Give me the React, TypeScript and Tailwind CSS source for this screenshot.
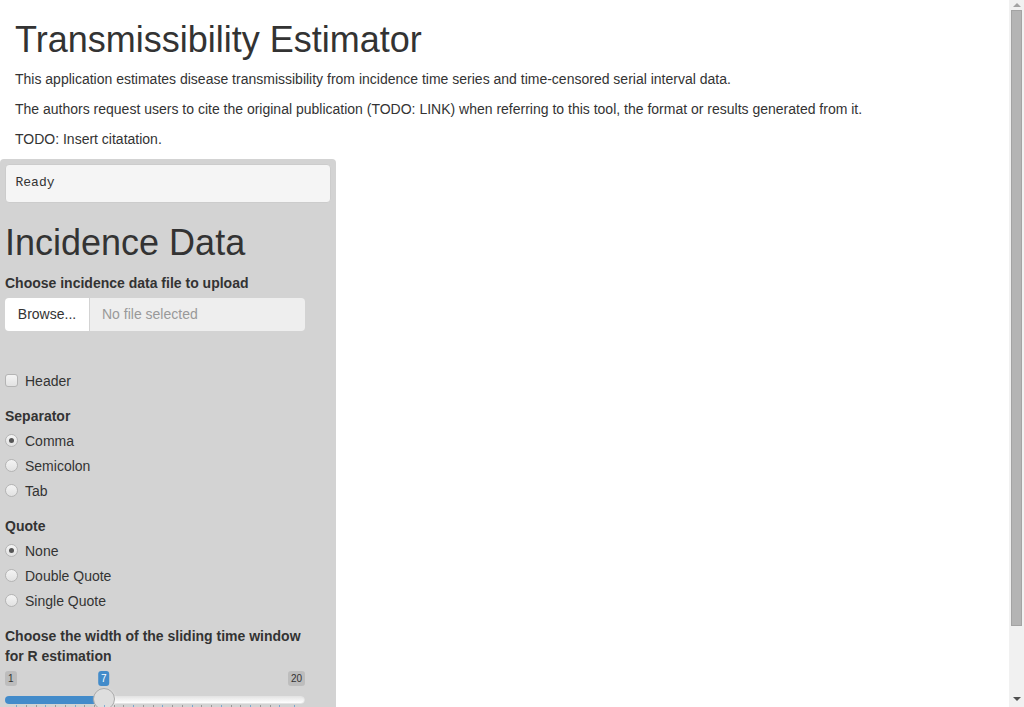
import React from "react"

const sans = "font-['Liberation_Sans','Helvetica_Neue',Arial,sans-serif]"

function Radio({ label, checked }: { label: string; checked?: boolean }) {
  return (
    <label className="flex items-center h-5 mb-[5px]">
      <span className="w-[13px] h-[13px] rounded-full border border-[#b4b4b4] bg-gradient-to-b from-[#f4f4f4] to-[#e2e2e2] flex items-center justify-center shrink-0">
        {checked && <span className="w-[5px] h-[5px] rounded-full bg-[#555]" />}
      </span>
      <span className="ml-[7px] text-sm text-[#333]">{label}</span>
    </label>
  )
}

function Slider() {
  const min = 1
  const max = 20
  const value = 7
  const pct = (value - min) / (max - min)
  const center = 11 + pct * 278
  const big: number[] = []
  const small: number[] = []
  for (let v = 1; v <= 19; v += 2) {
    const x = 11 + ((v - min) / (max - min)) * 278
    big.push(x)
    const step = (2 / 19) * 278
    if (v < 19) {
      small.push(x + step / 3, x + (2 * step) / 3)
    }
  }
  big.push(289)
  return (
    <div className="relative w-[300px] h-[64px]">
      <span className="absolute left-0 top-0 px-[3px] py-px text-[10px] leading-[13px] rounded-[3px] bg-black/10 text-[#333]">1</span>
      <span className="absolute right-0 top-0 px-[3px] py-px text-[10px] leading-[13px] rounded-[3px] bg-black/10 text-[#333]">20</span>
      <span
        className="absolute top-0 px-[3px] py-px text-[10px] leading-[13px] rounded-[3px] bg-[#428bca] text-white -translate-x-1/2"
        style={{ left: center }}
      >
        {value}
      </span>
      <div className="absolute left-0 right-0 top-[25px] h-2 rounded-full border border-[#e4e4e4] bg-gradient-to-b from-[#e6e6e6] to-white" />
      <div className="absolute left-0 top-[25px] h-2 rounded-l-full bg-[#428bca]" style={{ width: center }} />
      <div
        className="absolute top-[17px] w-[22px] h-[22px] rounded-full border border-[#aaa] bg-[#dedede] shadow-[1px_1px_3px_rgba(255,255,255,0.3)]"
        style={{ left: center - 11 }}
      />
      {big.map((x, i) => (
        <span key={"b" + i} className="absolute top-[34px] w-px h-2 bg-[#428bca]/60" style={{ left: x }} />
      ))}
      {small.map((x, i) => (
        <span key={"s" + i} className="absolute top-[34px] w-px h-1 bg-[#999]" style={{ left: x }} />
      ))}
    </div>
  )
}

function Scrollbar() {
  return (
    <div className="w-[15px] h-full bg-[#f1f1f1] flex flex-col items-center shrink-0">
      <div className="h-[10px] flex items-center justify-center">
        <span className="w-0 h-0 border-l-[4px] border-r-[4px] border-b-[4px] border-l-transparent border-r-transparent border-b-[#a3a3a3]" />
      </div>
      <div className="w-[11px] h-[616px] bg-[#b4b4b4] border border-[#a3a3a3]" />
      <div className="flex-1" />
      <div className="h-[16px] flex items-center justify-center">
        <span className="w-0 h-0 border-l-[4px] border-r-[4px] border-t-[4px] border-l-transparent border-r-transparent border-t-[#505050]" />
      </div>
    </div>
  )
}

export default function App() {
  return (
    <div className={`h-[707px] flex overflow-hidden bg-white text-[#333] ${sans}`}>
      <main className="flex-1 min-w-0 overflow-hidden">
        <div className="px-[15px]">
          <h1 className="text-[36px] leading-[1.1] mt-5 mb-[9px]">Transmissibility Estimator</h1>
          <p className="text-sm leading-5 mb-[10px]">
            This application estimates disease transmissibility from incidence time series and time-censored serial interval data.
          </p>
          <p className="text-sm leading-5 mb-[10px]">
            The authors request users to cite the original publication (TODO: LINK) when referring to this tool, the format or results generated from it.
          </p>
          <p className="text-sm leading-5 mb-[10px]">TODO: Insert citatation.</p>
        </div>

        <div className="w-[336px] bg-[#d3d3d3] rounded p-[5px] pb-[22px]">
          <pre className="font-['Liberation_Mono','Courier_New',monospace] text-[13px] leading-[18.6px] bg-[#f5f5f5] border border-[#cccccc] rounded p-[9.5px] mb-[10px]">
            Ready
          </pre>
          <h1 className="text-[36px] leading-[1.1] mt-5 mb-[10px]">Incidence Data</h1>

          <div className="w-[300px] mb-[15px]">
            <label className="block text-sm font-bold leading-5 mb-[5px]">Choose incidence data file to upload</label>
            <div className="flex h-[33px]">
              <button className="w-[84px] bg-white rounded-l text-sm text-[#333]">Browse...</button>
              <div className="flex-1 ml-px bg-[#eeeeee] rounded-r flex items-center px-3 text-sm text-[#999]">
                No file selected
              </div>
            </div>
            <div className="h-[25px]" />
          </div>

          <label className="flex items-center h-5 mb-[15px]">
            <span className="w-[13px] h-[13px] rounded-[3px] border border-[#b4b4b4] bg-gradient-to-b from-[#f4f4f4] to-[#e2e2e2]" />
            <span className="ml-[7px] text-sm">Header</span>
          </label>

          <div className="mb-[15px]">
            <label className="block text-sm font-bold leading-5 mb-[5px]">Separator</label>
            <Radio label="Comma" checked />
            <Radio label="Semicolon" />
            <Radio label="Tab" />
          </div>

          <div className="mb-[15px]">
            <label className="block text-sm font-bold leading-5 mb-[5px]">Quote</label>
            <Radio label="None" checked />
            <Radio label="Double Quote" />
            <Radio label="Single Quote" />
          </div>

          <div className="w-[300px]">
            <label className="block text-sm font-bold leading-5 mb-[5px]">
              Choose the width of the sliding time window for R estimation
            </label>
            <Slider />
          </div>
        </div>
      </main>
      <Scrollbar />
    </div>
  )
}
